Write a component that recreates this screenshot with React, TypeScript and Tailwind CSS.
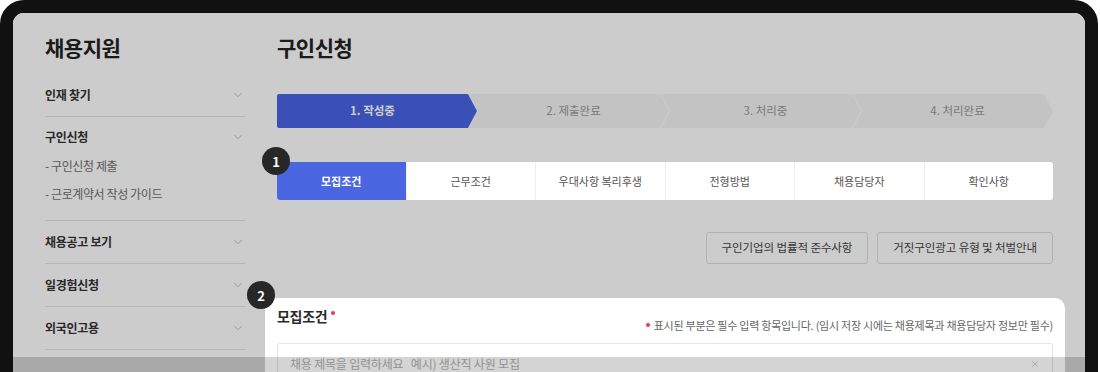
import React from "react";
import { ChevronDown, X } from "lucide-react";

const steps = ["1. 작성중", "2. 제출완료", "3. 처리중", "4. 처리완료"];
const tabs = ["모집조건", "근무조건", "우대사항 복리후생", "전형방법", "채용담당자", "확인사항"];

function Badge({ n, className }: { n: number; className: string }) {
  return (
    <span
      className={`absolute flex h-[28px] w-[28px] items-center justify-center rounded-full bg-[#272727] text-[13px] font-bold leading-none text-white ${className}`}
    >
      {n}
    </span>
  );
}

function NavRow({ label }: { label: string }) {
  return (
    <div className="flex h-[43px] items-center justify-between border-b border-[#e4e4e4]">
      <span className="text-[12px] font-bold tracking-[-0.3px] text-[#333]">{label}</span>
      <ChevronDown size={14} strokeWidth={1.5} className="text-[#bbb]" />
    </div>
  );
}

export default function App() {
  return (
    <div className="h-[372px] w-[1100px] overflow-hidden bg-white font-['Noto_Sans_CJK_KR',sans-serif]">
      {/* device frame */}
      <div className="h-[440px] w-[1098px] rounded-[24px] border-[13px] border-[#111]">
        <div className="relative isolate h-full overflow-hidden rounded-[11px] bg-white">
          <div className="flex gap-[32px] px-[32px] pt-[20px]">
            {/* sidebar */}
            <aside className="w-[200px] shrink-0">
              <h1 className="h-[28px] text-[21px] font-bold leading-[28px] tracking-[-0.5px] text-[#222]">채용지원</h1>
              <nav className="mt-[13px]">
                <NavRow label="인재 찾기" />
                <div className="border-b border-[#e4e4e4] pb-[12px]">
                  <div className="flex h-[40px] items-center justify-between">
                    <span className="text-[12px] font-bold tracking-[-0.3px] text-[#333]">구인신청</span>
                    <ChevronDown size={14} strokeWidth={1.5} className="text-[#bbb]" />
                  </div>
                  <ul className="-mt-[5px] text-[12px] tracking-[-0.4px] text-[#6f6f6f]">
                    <li className="flex h-[28px] items-center">- 구인신청 제출</li>
                    <li className="flex h-[28px] items-center">- 근로계약서 작성 가이드</li>
                  </ul>
                </div>
                <NavRow label="채용공고 보기" />
                <NavRow label="일경험신청" />
                <NavRow label="외국인고용" />
              </nav>
            </aside>

            {/* main */}
            <main className="flex-1">
              <h2 className="h-[28px] text-[21px] font-bold leading-[28px] tracking-[-0.5px] text-[#222]">구인신청</h2>

              <div className="mt-[33px] flex h-[34px]">
                {steps.map((s, i) => (
                  <div
                    key={s}
                    className={
                      i === 0
                        ? "flex flex-1 items-center justify-center rounded-l-[2px] bg-[#4a64e4] pr-[9px] text-[11.5px] font-bold text-white [clip-path:polygon(0_0,calc(100%_-_9px)_0,100%_50%,calc(100%_-_9px)_100%,0_100%)]"
                        : "-ml-[8px] flex flex-1 items-center justify-center bg-[#f4f4f4] pl-[9px] text-[11.5px] text-[#999] [clip-path:polygon(0_0,calc(100%_-_9px)_0,100%_50%,calc(100%_-_9px)_100%,0_100%,9px_50%)]"
                    }
                  >
                    {s}
                  </div>
                ))}
              </div>

              {/* tabs (highlighted) */}
              <div className="relative z-20 mt-[34px] flex h-[38px] rounded-[3px] bg-white">
                <Badge n={1} className="-left-[15px] -top-[15px]" />
                {tabs.map((t, i) => (
                  <div
                    key={t}
                    className={
                      i === 0
                        ? "flex flex-1 items-center justify-center rounded-l-[3px] bg-[#4a66e0] text-[11px] font-bold text-white"
                        : "flex flex-1 items-center justify-center border-l border-[#efefef] text-[11px] text-[#555]"
                    }
                  >
                    {t}
                  </div>
                ))}
              </div>

              <div className="mt-[32px] flex justify-end gap-[9px]">
                <button className="h-[32px] rounded-[3px] border border-[#dedede] bg-white px-[15px] text-[11.5px] tracking-[-0.1px] text-[#444]">
                  구인기업의 법률적 준수사항
                </button>
                <button className="h-[32px] rounded-[3px] border border-[#dedede] bg-white px-[15px] text-[11.5px] tracking-[-0.1px] text-[#444]">
                  거짓구인광고 유형 및 처벌안내
                </button>
              </div>

              {/* form card (highlighted) */}
              <section className="relative z-20 -mx-[12px] mt-[34px] rounded-[10px] bg-white px-[12px] pt-[8px] pb-[20px]">
                <Badge n={2} className="-left-[18px] -top-[17px]" />
                <div className="flex h-[28px] items-start justify-between">
                  <h3 className="flex h-[20px] items-center text-[14px] font-bold tracking-[-0.3px] text-[#2a2a2a]">
                    모집조건
                    <span className="-mt-[6px] ml-[4px] h-[4px] w-[4px] rounded-full bg-[#e8336b]" />
                  </h3>
                  <p className="mt-[11px] flex items-center text-[11px] leading-[16px] tracking-[-0.25px] text-[#666]">
                    <span className="mr-[4px] h-[4px] w-[4px] rounded-full bg-[#e8336b]" />
                    표시된 부분은 필수 입력 항목입니다. (임시 저장 시에는 채용제목과 채용담당자 정보만 필수)
                  </p>
                </div>
                <div className="mt-[9px] flex h-[42px] items-center justify-between rounded-[3px] border border-[#e3e3e3] px-[12px]">
                  <span className="whitespace-pre text-[12px] tracking-[-0.2px] text-[#b0b0b0]">
                    {"채용 제목을 입력하세요   예시) 생산직 사원 모집"}
                  </span>
                  <X size={10} strokeWidth={1.5} className="text-[#aaa]" />
                </div>
              </section>
            </main>
          </div>

          {/* dim overlay */}
          <div className="absolute inset-0 z-10 bg-black/20" />
          {/* bottom shade */}
          <div className="absolute inset-x-0 top-[344px] bottom-0 z-30 bg-black/[0.17]" />
        </div>
      </div>
    </div>
  );
}
